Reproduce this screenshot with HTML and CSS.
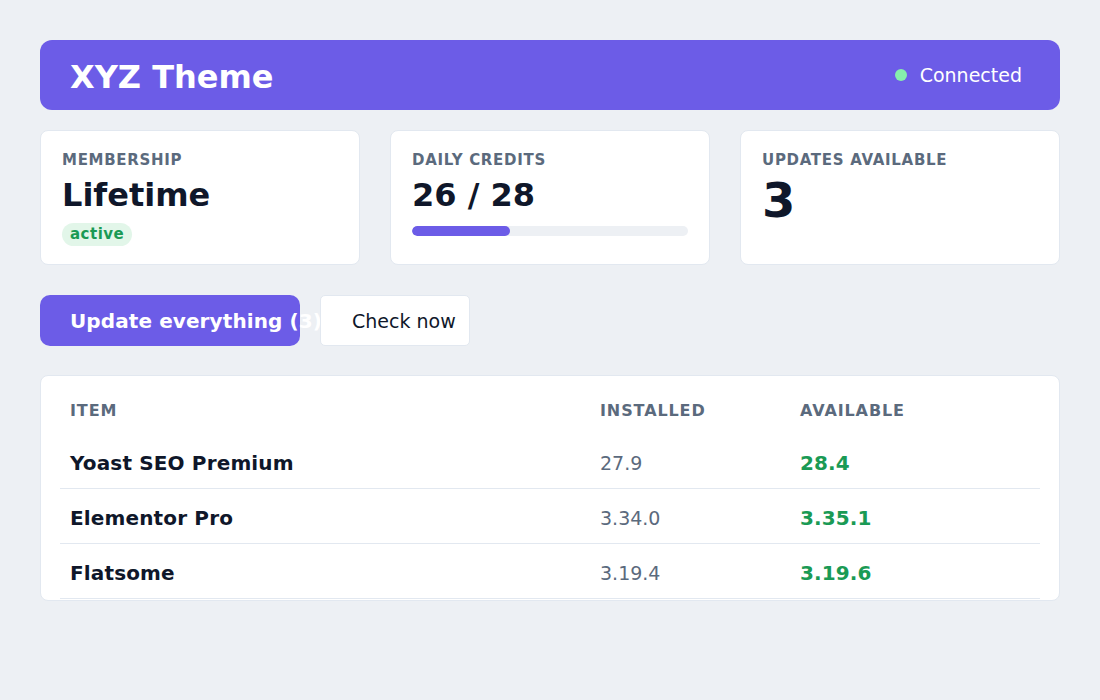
FILE: index.html
```html
<!DOCTYPE html>
<html lang="en">
<head>
<meta charset="utf-8">
<title>XYZ Theme</title>
<link rel="stylesheet" href="styles.css">
</head>
<body>
<main class="app">
  <header class="topbar">
    <h1 class="title">XYZ Theme</h1>
    <div class="status"><span class="dot"></span><span class="status-text">Connected</span></div>
  </header>

  <section class="stats">
    <div class="card">
      <div class="label">MEMBERSHIP</div>
      <div class="value">Lifetime</div>
      <span class="badge">active</span>
    </div>
    <div class="card">
      <div class="label">DAILY CREDITS</div>
      <div class="value">26 / 28</div>
      <div class="track"><div class="fill" style="width:35.5%"></div></div>
    </div>
    <div class="card">
      <div class="label">UPDATES AVAILABLE</div>
      <div class="value big">3</div>
    </div>
  </section>

  <div class="actions">
    <button class="btn btn-primary">Update everything (3)</button>
    <button class="btn btn-secondary">Check now</button>
  </div>

  <section class="table-card">
    <div class="row head">
      <div class="cell">ITEM</div>
      <div class="cell">INSTALLED</div>
      <div class="cell">AVAILABLE</div>
    </div>
    <div class="row">
      <div class="cell name">Yoast SEO Premium</div>
      <div class="cell installed">27.9</div>
      <div class="cell available">28.4</div>
    </div>
    <div class="row">
      <div class="cell name">Elementor Pro</div>
      <div class="cell installed">3.34.0</div>
      <div class="cell available">3.35.1</div>
    </div>
    <div class="row">
      <div class="cell name">Flatsome</div>
      <div class="cell installed">3.19.4</div>
      <div class="cell available">3.19.6</div>
    </div>
  </section>
</main>
</body>
</html>
```
FILE: styles.css
```css
* { box-sizing: border-box; }

html, body {
  margin: 0;
  padding: 0;
  background: #edf0f4;
}

body {
  font-family: "DejaVu Sans", sans-serif;
  color: #0f172a;
  padding: 40px;
}

.app {
  width: 1020px;
  display: flex;
  flex-direction: column;
}

.topbar {
  height: 70px;
  background: #6c5ce7;
  border-radius: 12px;
  display: flex;
  align-items: center;
  justify-content: space-between;
  padding: 0 38px 0 30px;
  color: #ffffff;
}

.title {
  margin: 3px 0 0;
  font-size: 32px;
  font-weight: bold;
  line-height: 38px;
}

.status {
  display: flex;
  align-items: center;
  gap: 13px;
}

.dot {
  width: 12px;
  height: 12px;
  border-radius: 50%;
  background: #86efac;
}

.status-text {
  font-size: 19px;
  line-height: 23px;
}

.stats {
  margin-top: 20px;
  display: grid;
  grid-template-columns: repeat(3, 320px);
  gap: 30px;
}

.card {
  background: #ffffff;
  border: 1px solid #e2e8f0;
  border-radius: 8px;
  padding: 20px 21px 18px;
  height: 135px;
}

.label {
  font-size: 15px;
  line-height: 18px;
  font-weight: bold;
  letter-spacing: 0.7px;
  color: #5b6a7d;
}

.value {
  margin-top: 7px;
  font-size: 32px;
  line-height: 38px;
  font-weight: bold;
  color: #0f172a;
}

.value.big {
  margin-top: 3px;
  font-size: 48px;
  line-height: 56px;
}

.badge {
  display: inline-block;
  margin-top: 9px;
  padding: 3px 8px;
  font-size: 15px;
  line-height: 17px;
  font-weight: bold;
  letter-spacing: 0.5px;
  color: #1a9a55;
  background: #e2f6e9;
  border-radius: 12px;
}

.track {
  margin-top: 12px;
  height: 10px;
  border-radius: 5px;
  background: #edf0f4;
  overflow: hidden;
}

.fill {
  height: 100%;
  border-radius: 5px;
  background: #6c5ce7;
}

.actions {
  margin-top: 30px;
  display: flex;
  gap: 20px;
}

.btn {
  font-family: "DejaVu Sans", sans-serif;
  height: 51px;
  display: inline-flex;
  align-items: center;
  justify-content: flex-start;
  white-space: nowrap;
  overflow: visible;
  cursor: pointer;
  margin: 0;
}

.btn-primary {
  width: 260px;
  padding: 0 30px;
  border: none;
  border-radius: 10px;
  background: #6c5ce7;
  color: #ffffff;
  font-size: 20px;
  font-weight: bold;
  letter-spacing: 0.1px;
}

.btn-secondary {
  width: 150px;
  padding: 0 31px;
  border: 1px solid #e2e8f0;
  border-radius: 5px;
  background: #ffffff;
  color: #0f172a;
  font-size: 19px;
  font-weight: normal;
}

.table-card {
  margin-top: 29px;
  background: #ffffff;
  border: 1px solid #e2e8f0;
  border-radius: 8px;
  padding: 0 19px 1px;
}

.row {
  display: grid;
  grid-template-columns: 530px 200px 1fr;
  padding: 18px 0 13px;
  border-bottom: 1px solid #e2e8f0;
  line-height: 23px;
}

.row.head {
  padding: 26px 0 15px;
  border-bottom: none;
  line-height: 17px;
}

.cell {
  padding: 0 10px;
}

.head .cell {
  font-size: 16px;
  font-weight: bold;
  letter-spacing: 0.9px;
  color: #5b6a7d;
}

.name {
  font-size: 20px;
  font-weight: bold;
  letter-spacing: 0.15px;
  color: #0f172a;
}

.installed {
  font-size: 19px;
  color: #5b6a7d;
}

.available {
  font-size: 20px;
  font-weight: bold;
  letter-spacing: 0.1px;
  color: #1a9a55;
}
```
